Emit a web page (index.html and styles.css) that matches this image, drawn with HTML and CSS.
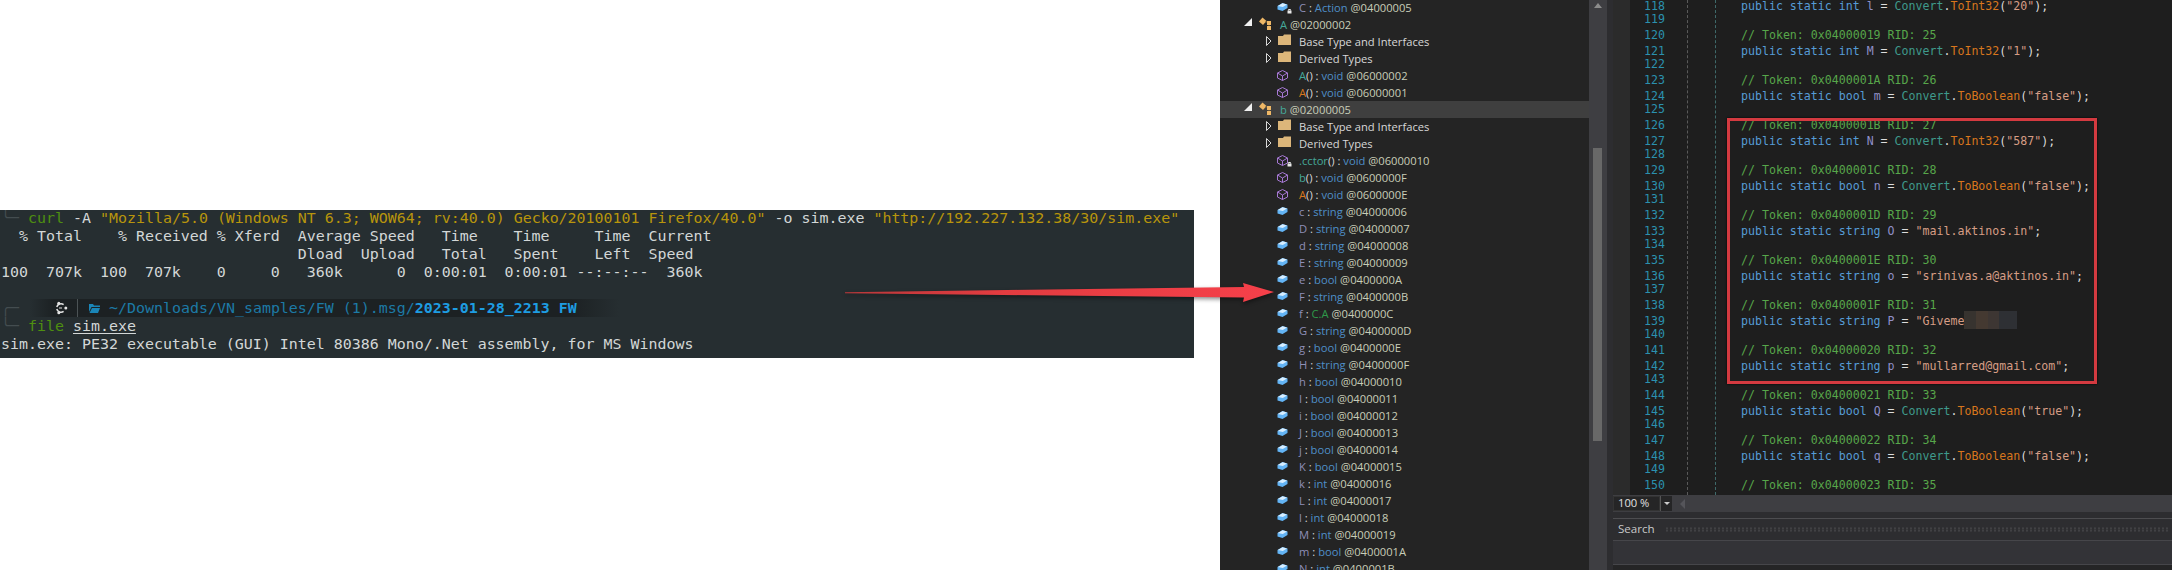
FILE: index.html
```html
<!DOCTYPE html>
<html lang="en">
<head>
<meta charset="utf-8">
<title>Terminal and decompiler</title>
<link rel="stylesheet" href="styles.css">
</head>
<body>
<svg class="defs" aria-hidden="true">
  <defs>
    <g id="i-field"><path d="M0.5 7 L5.5 4 L10.5 5.5 L10.5 9 L5.5 12 L0.5 10.5 Z" fill="#63b4f5"/><path d="M0.8 7 L5.5 4.2 L10 5.6 L5.8 8 Z" fill="#d8eeff"/></g>
    <g id="i-method" fill="none" stroke="#a678d4" stroke-width="1"><path d="M5.5 3.5 L10.5 6 V11 L5.5 13.5 L0.5 11 V6 Z"/><path d="M0.5 6 L5.5 9 L10.5 6 M5.5 9 V13.5"/></g>
    <g id="i-lock"><rect x="10.5" y="11.5" width="4" height="3" fill="#e8e8e8"/><path d="M11.5 11.5 V10.5 H13.5 V11.5" fill="none" stroke="#e8e8e8"/></g>
    <g id="i-class"><path d="M4.5 1.5 L8.5 5 L5 9 L1 5.5 Z" fill="#eeb766"/><path d="M7 6 H11 V12" fill="none" stroke="#8a6a3a"/><rect x="9" y="5" width="4" height="4" fill="#eeb766"/><rect x="9" y="10" width="4" height="4" fill="#eeb766"/></g>
    <g id="i-folder"><path d="M0 3 H5 L6 1.5 H13 V12 H0 Z" fill="#dcb67a"/></g>
    <g id="i-open"><path d="M8 2 V10 H0 Z" fill="#f0f0f0"/></g>
    <g id="i-closed"><path d="M0.5 3.5 L5 8 L0.5 12.5 Z" fill="none" stroke="#d8d8d8"/></g>
  </defs>
</svg>

<main class="page">
  <section class="left">
    <div class="terminal">
      <div class="tl"><span class="dim">╰─</span> <span class="g">curl</span> -A <span class="y">"Mozilla/5.0 (Windows NT 6.3; WOW64; rv:40.0) Gecko/20100101 Firefox/40.0"</span> -o sim.exe <span class="y">"http://192.227.132.38/30/sim.exe"</span></div>
      <div class="tl">  % Total    % Received % Xferd  Average Speed   Time    Time     Time  Current</div>
      <div class="tl">                                 Dload  Upload   Total   Spent    Left  Speed</div>
      <div class="tl">100  707k  100  707k    0     0   360k      0  0:00:01  0:00:01 --:--:--  360k</div>
      <div class="tl"> </div>
      <div class="tl prompt">
        <span class="dim">╭─</span>
        <div class="strip">
          <svg class="ubuntu" viewBox="0 0 14 14"><path d="M9.6 3.6 A4.3 4.3 0 0 0 2.8 6 M2.8 8 A4.3 4.3 0 0 0 9.6 10.4" fill="none" stroke="#e4e4e4" stroke-width="1.5"/><circle cx="11.8" cy="7" r="1.5" fill="#e4e4e4"/><circle cx="4.8" cy="2.2" r="1.5" fill="#e4e4e4"/><circle cx="4.8" cy="11.8" r="1.5" fill="#e4e4e4"/><path d="M8 7 H5" stroke="#e4e4e4" stroke-width="1"/></svg>
          <span class="divider"></span>
          <svg class="pfolder" viewBox="0 0 11 9"><path d="M0 0 H4 L5 1.5 H11 V3 H2.5 L0 8 Z M3 4 H11 L9 9 H0.5 Z" fill="#1a86b8"/></svg>
          <span class="path">~/Downloads/VN_samples/FW (1).msg/<b>2023-01-28_2213 FW</b></span>
        </div>
      </div>
      <div class="tl"><span class="dim">╰─</span> <span class="g">file</span> <u>sim.exe</u></div>
      <div class="tl">sim.exe: PE32 executable (GUI) Intel 80386 Mono/.Net assembly, for MS Windows</div>
    </div>
  </section>

  <section class="tree-pane">
    <ul class="tree">
      <li class="row m"><svg class="ic"><use href="#i-field"/><use href="#i-lock"/></svg><span class="f">C</span> : <span class="k">Action</span> <span class="a">@04000005</span></li>
      <li class="row ty"><svg class="tw8"><use href="#i-open"/></svg><svg class="cl"><use href="#i-class"/></svg><span class="t">A</span> <span class="a">@02000002</span></li>
      <li class="row fo"><svg class="tw5"><use href="#i-closed"/></svg><svg class="fd"><use href="#i-folder"/></svg><span class="n">Base Type and Interfaces</span></li>
      <li class="row fo"><svg class="tw5"><use href="#i-closed"/></svg><svg class="fd"><use href="#i-folder"/></svg><span class="n">Derived Types</span></li>
      <li class="row m"><svg class="ic"><use href="#i-method"/></svg><span class="t">A</span><span class="n">()</span> : <span class="k">void</span> <span class="a">@06000002</span></li>
      <li class="row m"><svg class="ic"><use href="#i-method"/></svg><span class="o">A</span><span class="n">()</span> : <span class="k">void</span> <span class="a">@06000001</span></li>
      <li class="row ty sel"><svg class="tw8"><use href="#i-open"/></svg><svg class="cl"><use href="#i-class"/></svg><span class="t">b</span> <span class="a">@02000005</span></li>
      <li class="row fo"><svg class="tw5"><use href="#i-closed"/></svg><svg class="fd"><use href="#i-folder"/></svg><span class="n">Base Type and Interfaces</span></li>
      <li class="row fo"><svg class="tw5"><use href="#i-closed"/></svg><svg class="fd"><use href="#i-folder"/></svg><span class="n">Derived Types</span></li>
      <li class="row m"><svg class="ic"><use href="#i-method"/><use href="#i-lock"/></svg><span class="t">.cctor</span><span class="n">()</span> : <span class="k">void</span> <span class="a">@06000010</span></li>
      <li class="row m"><svg class="ic"><use href="#i-method"/></svg><span class="t">b</span><span class="n">()</span> : <span class="k">void</span> <span class="a">@0600000F</span></li>
      <li class="row m"><svg class="ic"><use href="#i-method"/></svg><span class="o">A</span><span class="n">()</span> : <span class="k">void</span> <span class="a">@0600000E</span></li>
      <li class="row m"><svg class="ic"><use href="#i-field"/></svg><span class="f">c</span> : <span class="k">string</span> <span class="a">@04000006</span></li>
      <li class="row m"><svg class="ic"><use href="#i-field"/></svg><span class="f">D</span> : <span class="k">string</span> <span class="a">@04000007</span></li>
      <li class="row m"><svg class="ic"><use href="#i-field"/></svg><span class="f">d</span> : <span class="k">string</span> <span class="a">@04000008</span></li>
      <li class="row m"><svg class="ic"><use href="#i-field"/></svg><span class="f">E</span> : <span class="k">string</span> <span class="a">@04000009</span></li>
      <li class="row m"><svg class="ic"><use href="#i-field"/></svg><span class="f">e</span> : <span class="k">bool</span> <span class="a">@0400000A</span></li>
      <li class="row m"><svg class="ic"><use href="#i-field"/></svg><span class="f">F</span> : <span class="k">string</span> <span class="a">@0400000B</span></li>
      <li class="row m"><svg class="ic"><use href="#i-field"/></svg><span class="f">f</span> : <span class="c">C.A</span> <span class="a">@0400000C</span></li>
      <li class="row m"><svg class="ic"><use href="#i-field"/></svg><span class="f">G</span> : <span class="k">string</span> <span class="a">@0400000D</span></li>
      <li class="row m"><svg class="ic"><use href="#i-field"/></svg><span class="f">g</span> : <span class="k">bool</span> <span class="a">@0400000E</span></li>
      <li class="row m"><svg class="ic"><use href="#i-field"/></svg><span class="f">H</span> : <span class="k">string</span> <span class="a">@0400000F</span></li>
      <li class="row m"><svg class="ic"><use href="#i-field"/></svg><span class="f">h</span> : <span class="k">bool</span> <span class="a">@04000010</span></li>
      <li class="row m"><svg class="ic"><use href="#i-field"/></svg><span class="f">I</span> : <span class="k">bool</span> <span class="a">@04000011</span></li>
      <li class="row m"><svg class="ic"><use href="#i-field"/></svg><span class="f">i</span> : <span class="k">bool</span> <span class="a">@04000012</span></li>
      <li class="row m"><svg class="ic"><use href="#i-field"/></svg><span class="f">J</span> : <span class="k">bool</span> <span class="a">@04000013</span></li>
      <li class="row m"><svg class="ic"><use href="#i-field"/></svg><span class="f">j</span> : <span class="k">bool</span> <span class="a">@04000014</span></li>
      <li class="row m"><svg class="ic"><use href="#i-field"/></svg><span class="f">K</span> : <span class="k">bool</span> <span class="a">@04000015</span></li>
      <li class="row m"><svg class="ic"><use href="#i-field"/></svg><span class="f">k</span> : <span class="k">int</span> <span class="a">@04000016</span></li>
      <li class="row m"><svg class="ic"><use href="#i-field"/></svg><span class="f">L</span> : <span class="k">int</span> <span class="a">@04000017</span></li>
      <li class="row m"><svg class="ic"><use href="#i-field"/></svg><span class="f">l</span> : <span class="k">int</span> <span class="a">@04000018</span></li>
      <li class="row m"><svg class="ic"><use href="#i-field"/></svg><span class="f">M</span> : <span class="k">int</span> <span class="a">@04000019</span></li>
      <li class="row m"><svg class="ic"><use href="#i-field"/></svg><span class="f">m</span> : <span class="k">bool</span> <span class="a">@0400001A</span></li>
      <li class="row m"><svg class="ic"><use href="#i-field"/></svg><span class="f">N</span> : <span class="k">int</span> <span class="a">@0400001B</span></li>
    </ul>
  </section>

  <div class="vscroll"><span class="up"></span><span class="thumb"></span></div>
  <div class="splitter"></div>

  <section class="right">
    <div class="editor">
      <div class="gutter"></div>
      <div class="code">
        <div class="ln c1"><span class="no">118</span><span class="src"><i class="kw">public static int</i> <i class="fn">l</i> = <i class="ty">Convert</i>.<i class="me">ToInt32</i>(<i class="st">"20"</i>);</span></div>
        <div class="ln c0"><span class="no">119</span></div>
        <div class="ln c2"><span class="no">120</span><span class="src cm">// Token: 0x04000019 RID: 25</span></div>
        <div class="ln c1"><span class="no">121</span><span class="src"><i class="kw">public static int</i> <i class="fn">M</i> = <i class="ty">Convert</i>.<i class="me">ToInt32</i>(<i class="st">"1"</i>);</span></div>
        <div class="ln c0"><span class="no">122</span></div>
        <div class="ln c2"><span class="no">123</span><span class="src cm">// Token: 0x0400001A RID: 26</span></div>
        <div class="ln c1"><span class="no">124</span><span class="src"><i class="kw">public static bool</i> <i class="fn">m</i> = <i class="ty">Convert</i>.<i class="me">ToBoolean</i>(<i class="st">"false"</i>);</span></div>
        <div class="ln c0"><span class="no">125</span></div>
        <div class="ln c2"><span class="no">126</span><span class="src cm">// Token: 0x0400001B RID: 27</span></div>
        <div class="ln c1"><span class="no">127</span><span class="src"><i class="kw">public static int</i> <i class="fn">N</i> = <i class="ty">Convert</i>.<i class="me">ToInt32</i>(<i class="st">"587"</i>);</span></div>
        <div class="ln c0"><span class="no">128</span></div>
        <div class="ln c2"><span class="no">129</span><span class="src cm">// Token: 0x0400001C RID: 28</span></div>
        <div class="ln c1"><span class="no">130</span><span class="src"><i class="kw">public static bool</i> <i class="fn">n</i> = <i class="ty">Convert</i>.<i class="me">ToBoolean</i>(<i class="st">"false"</i>);</span></div>
        <div class="ln c0"><span class="no">131</span></div>
        <div class="ln c2"><span class="no">132</span><span class="src cm">// Token: 0x0400001D RID: 29</span></div>
        <div class="ln c1"><span class="no">133</span><span class="src"><i class="kw">public static string</i> <i class="fn">O</i> = <i class="st">"mail.aktinos.in"</i>;</span></div>
        <div class="ln c0"><span class="no">134</span></div>
        <div class="ln c2"><span class="no">135</span><span class="src cm">// Token: 0x0400001E RID: 30</span></div>
        <div class="ln c1"><span class="no">136</span><span class="src"><i class="kw">public static string</i> <i class="fn">o</i> = <i class="st">"srinivas.a@aktinos.in"</i>;</span></div>
        <div class="ln c0"><span class="no">137</span></div>
        <div class="ln c2"><span class="no">138</span><span class="src cm">// Token: 0x0400001F RID: 31</span></div>
        <div class="ln c1"><span class="no">139</span><span class="src"><i class="kw">public static string</i> <i class="fn">P</i> = <i class="st">"Giveme</i><span class="redact"></span></span></div>
        <div class="ln c0"><span class="no">140</span></div>
        <div class="ln c2"><span class="no">141</span><span class="src cm">// Token: 0x04000020 RID: 32</span></div>
        <div class="ln c1"><span class="no">142</span><span class="src"><i class="kw">public static string</i> <i class="fn">p</i> = <i class="st">"mullarred@gmail.com"</i>;</span></div>
        <div class="ln c0"><span class="no">143</span></div>
        <div class="ln c2"><span class="no">144</span><span class="src cm">// Token: 0x04000021 RID: 33</span></div>
        <div class="ln c1"><span class="no">145</span><span class="src"><i class="kw">public static bool</i> <i class="fn">Q</i> = <i class="ty">Convert</i>.<i class="me">ToBoolean</i>(<i class="st">"true"</i>);</span></div>
        <div class="ln c0"><span class="no">146</span></div>
        <div class="ln c2"><span class="no">147</span><span class="src cm">// Token: 0x04000022 RID: 34</span></div>
        <div class="ln c1"><span class="no">148</span><span class="src"><i class="kw">public static bool</i> <i class="fn">q</i> = <i class="ty">Convert</i>.<i class="me">ToBoolean</i>(<i class="st">"false"</i>);</span></div>
        <div class="ln c0"><span class="no">149</span></div>
        <div class="ln c2"><span class="no">150</span><span class="src cm">// Token: 0x04000023 RID: 35</span></div>
      </div>
      <span class="guide g1"></span>
      <span class="guide g2"></span>
      <div class="redbox"></div>
    </div>
    <div class="zoombar">
      <span class="combo">100 %</span>
      <span class="drop"></span>
      <span class="hleft"></span>
    </div>
    <div class="search">
      <div class="search-head"><span class="search-title">Search</span><span class="grip"></span></div>
      <div class="search-input"></div>
      <div class="search-rest"></div>
    </div>
  </section>

  <svg class="arrow" viewBox="0 0 430 30" width="430" height="30">
    <defs>
      <linearGradient id="arrowfill" x1="0" x2="1" y1="0" y2="0">
        <stop offset="0" stop-color="#b8383a"/>
        <stop offset="0.35" stop-color="#e23c40"/>
        <stop offset="1" stop-color="#f6404a"/>
      </linearGradient>
    </defs>
    <path d="M0 13.2 L399 8 L398 4 L429 13 L398 23 L399 18.5 L0 14.2 Z" fill="url(#arrowfill)"/>
  </svg>
</main>
</body>
</html>
```
FILE: styles.css
```css
* { box-sizing: border-box; }
html, body { margin: 0; padding: 0; background: #fff; }
body { width: 2172px; height: 570px; overflow: hidden; }
.defs { position: absolute; width: 0; height: 0; }

.page { position: relative; display: flex; width: 2172px; height: 570px; overflow: hidden; }

/* terminal */
.left { width: 1220px; flex: none; padding-top: 210px; }
.terminal {
  width: 1194px; height: 148px; padding-left: 1px;
  background: #262e31; color: #d3d7d7;
  font: 14.95px/18px "DejaVu Sans Mono", monospace;
  overflow: hidden;
}
.tl { height: 18px; white-space: pre; }
.tl:first-child { margin-top: -1px; }
.dim { color: #444d50; }
.g { color: #4e8f10; }
.y { color: #b8950c; }
.prompt { display: flex; }
.strip {
  display: flex; align-items: center;
  width: 589px; height: 18px; margin-left: 11px; padding-left: 24px;
  background: linear-gradient(90deg, #262e31 0, #1c2123 24px, #1c2123 540px, #262e31 100%);
  color: #1c7aa6;
}
.ubuntu { width: 14px; height: 14px; flex: none; }
.divider { width: 1px; height: 18px; margin: 0 11px 0 9px; background: #4c5355; flex: none; }
.pfolder { width: 11px; height: 9px; flex: none; margin-right: 9px; }
.path b { color: #1e9de2; font-weight: 700; }
u { text-decoration: underline; text-underline-offset: 2px; }

/* tree */
.tree-pane { width: 369px; flex: none; background: #242424; overflow: hidden; }
.tree {
  list-style: none; margin: -1px 0 0; padding: 0;
  font: 11.2px/17px "Open Sans", sans-serif;
  color: #d8d8d8;
}
.row { display: block; height: 17px; white-space: pre; }
.row.m { padding-left: 57px; }
.row.fo { padding-left: 46px; }
.row.ty { padding-left: 24px; }
.row.sel { background: #3f3f3f; }
.row svg { display: inline-block; vertical-align: top; height: 17px; overflow: visible; }
.ic { width: 12px; margin-right: 10px; }
.tw8 { width: 8px; margin-right: 6px; }
.tw5 { width: 6px; margin-right: 6px; }
.cl { width: 14px; margin-right: 8px; }
.fd { width: 13px; margin-right: 8px; }
.f { color: #8f8fb8; }
.k { color: #4f8fc8; }
.a { color: #c8cdb8; }
.t { color: #45a89a; }
.o { color: #d8781e; }
.c { color: #2f9a4a; }
.n { color: #d8d8d8; }

/* scrollbars */
.vscroll { position: relative; width: 18px; flex: none; background: #3e3e42; }
.up {
  position: absolute; left: 5px; top: 3px;
  border-left: 4px solid transparent; border-right: 4px solid transparent;
  border-bottom: 5px solid #8c8c8c;
}
.thumb { position: absolute; left: 4px; top: 148px; width: 9px; height: 293px; background: #686868; }
.splitter { width: 6px; flex: none; background: #2d2d30; }

/* editor */
.right { flex: 1; display: flex; flex-direction: column; min-width: 0; background: #2d2d30; }
.editor { position: relative; display: flex; height: 495px; flex: none; overflow: hidden; background: #1e1e1e; }
.gutter { width: 17px; flex: none; background: #2b2b2b; }
.code {
  flex: 1; min-width: 0;
  font: 11.6px/13px "DejaVu Sans Mono", monospace;
  color: #dcdcdc;
}
.ln { display: flex; white-space: pre; }
.ln.c1 { height: 13px; }
.ln.c0, .ln.c2 { height: 16px; }
.no { width: 35px; flex: none; text-align: right; color: #2b91af; }
.src { margin-left: 76px; }
.ln i { font-style: normal; }
.kw { color: #569cd6; }
.fn { color: #9090c8; }
.ty { color: #3f9a8c; }
.me { color: #d8761d; }
.st { color: #d69d85; }
.cm { color: #57a64a; }
.redact { position: relative; display: inline-block; width: 53px; height: 0; }
.redact::before {
  content: ""; position: absolute; left: 0; top: -14px; width: 53px; height: 18px;
  background: linear-gradient(90deg, #37332f 0 12px, #443931 12px 24px, #3d3633 24px 35px, #2e3034 35px 53px);
}
.guide { position: absolute; top: 0; bottom: 0; width: 0; }
.g1 { left: 74px; border-left: 1px dashed #5a5a5a; }
.g2 { left: 102px; border-left: 1px dashed #3f6a6a; }
.redbox {
  position: absolute; left: 114px; top: 118px; width: 370px; height: 266px;
  border: 3px solid #d43a40;
  box-shadow: 0 0 2px #000;
}

.zoombar { display: flex; align-items: center; height: 17px; flex: none; background: #3e3e42; }
.combo {
  width: 47px; height: 15px; flex: none;
  background: #252526; border: 1px solid #333;
  color: #e0e0e0;
  font: 11.2px/12px "Open Sans", sans-serif; padding-left: 4px;
}
.drop { position: relative; width: 12px; height: 15px; flex: none; background: #252526; border-left: 1px solid #555; }
.drop::after {
  content: ""; position: absolute; left: 3px; top: 6px;
  border-left: 3px solid transparent; border-right: 3px solid transparent; border-top: 3px solid #ccc;
}
.hleft {
  width: 0; height: 0; margin-left: 8px;
  border-top: 5px solid transparent; border-bottom: 5px solid transparent; border-right: 5px solid #55555a;
}

.search { flex: 1; margin-top: 6px; display: flex; flex-direction: column; }
.search-head {
  display: flex; align-items: center; height: 23px; flex: none;
  border-top: 1px solid #4d4d50; border-bottom: 1px solid #46464a;
  padding-left: 5px; background: #2d2d30;
}
.search-title { color: #c8c8c8; font: 11.6px/16px "Open Sans", sans-serif; padding-bottom: 2px; }
.grip {
  flex: 1; height: 5px; margin: 0 4px 0 10px;
  background-image: radial-gradient(circle, #454548 0.8px, transparent 1.1px);
  background-size: 4px 2.5px;
}
.search-input { height: 24px; flex: none; background: #333337; border-bottom: 1px solid #46464a; }
.search-rest { flex: 1; background: #252526; }

.arrow {
  position: absolute; left: 845px; top: 279px;
  filter: drop-shadow(0 2px 2px rgba(0, 0, 0, 0.45));
}
```
